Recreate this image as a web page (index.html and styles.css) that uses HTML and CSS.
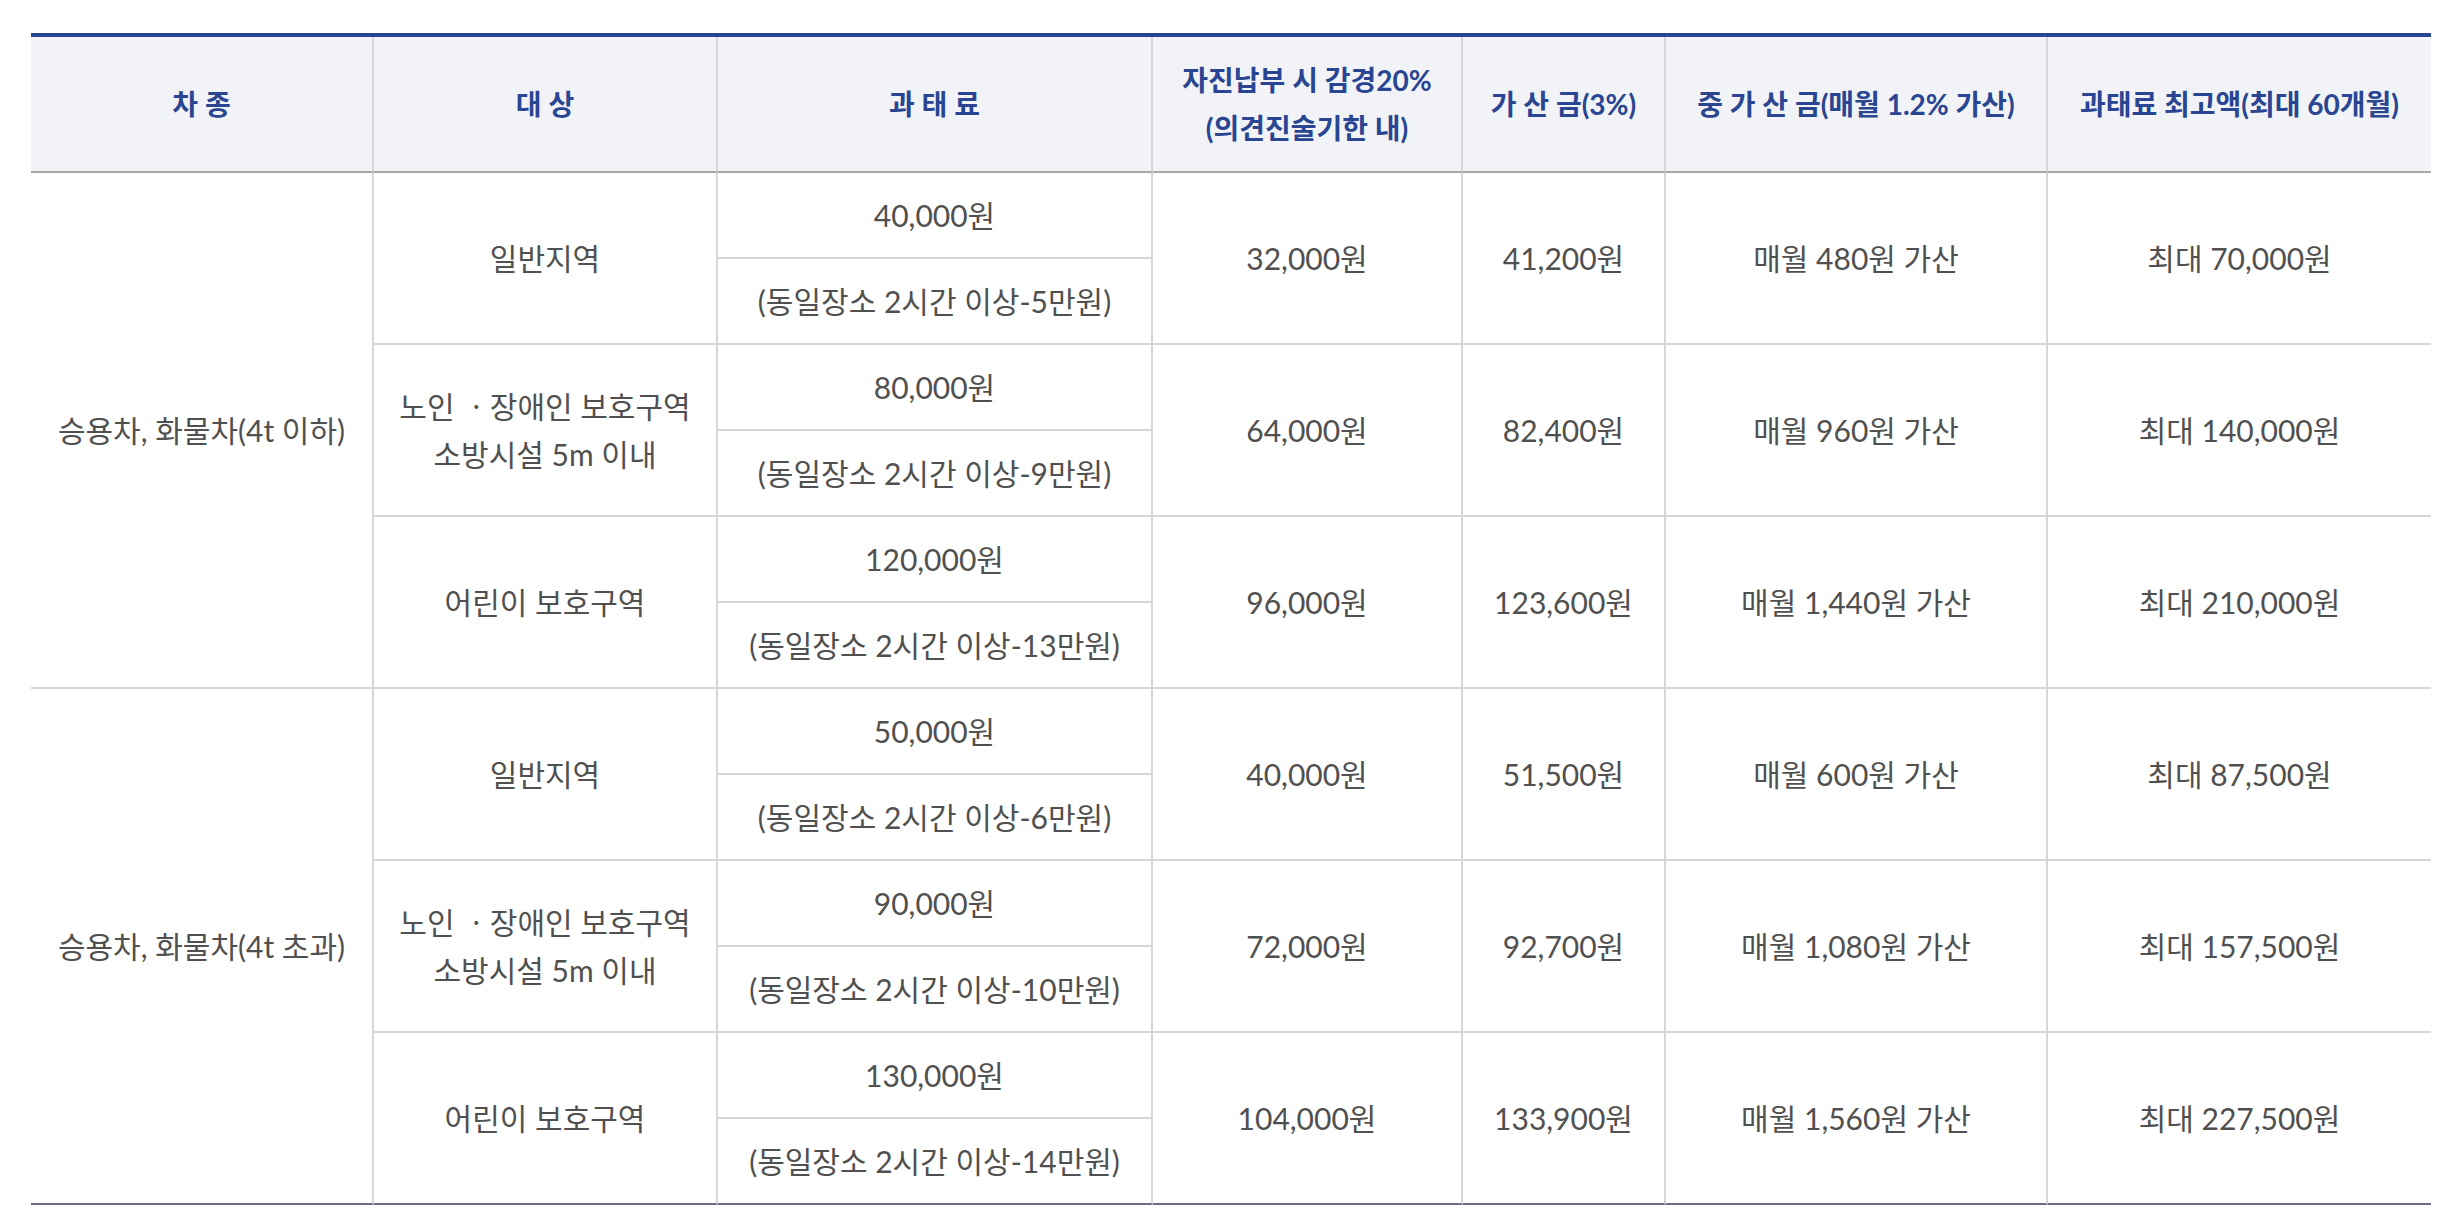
FILE: index.html
```html
<!DOCTYPE html>
<html lang="ko">
<head>
<meta charset="utf-8">
<title>과태료 안내</title>
<link rel="stylesheet" href="styles.css">
</head>
<body>
<div class="wrap">
<table class="fine">
<colgroup>
<col class="c1"><col class="c2"><col class="c3"><col class="c4"><col class="c5"><col class="c6"><col class="c7">
</colgroup>
<thead>
<tr>
<th>차 종</th>
<th>대 상</th>
<th>과 태 료</th>
<th>자진납부 시 감경20%<br>(의견진술기한 내)</th>
<th>가 산 금(3%)</th>
<th>중 가 산 금(매월 1.2% 가산)</th>
<th class="last">과태료 최고액(최대 60개월)</th>
</tr>
</thead>
<tbody>
<tr>
<td rowspan="6">승용차, 화물차(4t 이하)</td>
<td rowspan="2">일반지역</td>
<td>40,000원</td>
<td rowspan="2">32,000원</td>
<td rowspan="2">41,200원</td>
<td rowspan="2">매월 480원 가산</td>
<td rowspan="2" class="last">최대 70,000원</td>
</tr>
<tr><td>(동일장소 2시간 이상-5만원)</td></tr>
<tr>
<td rowspan="2">노인 ㆍ장애인 보호구역<br>소방시설 5m 이내</td>
<td>80,000원</td>
<td rowspan="2">64,000원</td>
<td rowspan="2">82,400원</td>
<td rowspan="2">매월 960원 가산</td>
<td rowspan="2" class="last">최대 140,000원</td>
</tr>
<tr><td>(동일장소 2시간 이상-9만원)</td></tr>
<tr>
<td rowspan="2">어린이 보호구역</td>
<td>120,000원</td>
<td rowspan="2">96,000원</td>
<td rowspan="2">123,600원</td>
<td rowspan="2">매월 1,440원 가산</td>
<td rowspan="2" class="last">최대 210,000원</td>
</tr>
<tr><td>(동일장소 2시간 이상-13만원)</td></tr>
<tr>
<td rowspan="6" class="bot">승용차, 화물차(4t 초과)</td>
<td rowspan="2">일반지역</td>
<td>50,000원</td>
<td rowspan="2">40,000원</td>
<td rowspan="2">51,500원</td>
<td rowspan="2">매월 600원 가산</td>
<td rowspan="2" class="last">최대 87,500원</td>
</tr>
<tr><td>(동일장소 2시간 이상-6만원)</td></tr>
<tr>
<td rowspan="2">노인 ㆍ장애인 보호구역<br>소방시설 5m 이내</td>
<td>90,000원</td>
<td rowspan="2">72,000원</td>
<td rowspan="2">92,700원</td>
<td rowspan="2">매월 1,080원 가산</td>
<td rowspan="2" class="last">최대 157,500원</td>
</tr>
<tr><td>(동일장소 2시간 이상-10만원)</td></tr>
<tr>
<td rowspan="2" class="bot">어린이 보호구역</td>
<td>130,000원</td>
<td rowspan="2" class="bot">104,000원</td>
<td rowspan="2" class="bot">133,900원</td>
<td rowspan="2" class="bot">매월 1,560원 가산</td>
<td rowspan="2" class="last bot">최대 227,500원</td>
</tr>
<tr><td class="bot">(동일장소 2시간 이상-14만원)</td></tr>
</tbody>
</table>
</div>
</body>
</html>
```

FILE: styles.css
```css
html, body {
  margin: 0;
  padding: 0;
  background: #ffffff;
}

.wrap {
  padding: 33px 0 0 31px;
}

.fine {
  width: 2400px;
  table-layout: fixed;
  border-collapse: separate;
  border-spacing: 0;
  border-top: 4px solid #2a4592;
  font-family: Lato, "Noto Sans CJK KR", sans-serif;
  color: #505050;
}

.c1 { width: 343px; }
.c2 { width: 344px; }
.c3 { width: 435px; }
.c4 { width: 310px; }
.c5 { width: 203px; }
.c6 { width: 382px; }
.c7 { width: 383px; }

.fine th,
.fine td {
  padding: 0;
  text-align: center;
  vertical-align: middle;
  box-sizing: border-box;
  border-right: 2px solid #d5d6dc;
  border-bottom: 2px solid #d5d6dc;
}

.fine th {
  height: 136px;
  background: #f1f3f7;
  color: #2a4592;
  font-size: 28px;
  font-weight: 700;
  line-height: 48px;
  border-bottom-color: #a8a8a8;
}

.fine td {
  height: 86px;
  font-size: 30px;
  font-weight: 400;
  line-height: 48px;
}

.fine .last {
  border-right: 0;
}

.fine .bot {
  border-bottom-color: #6b7080;
}
```
